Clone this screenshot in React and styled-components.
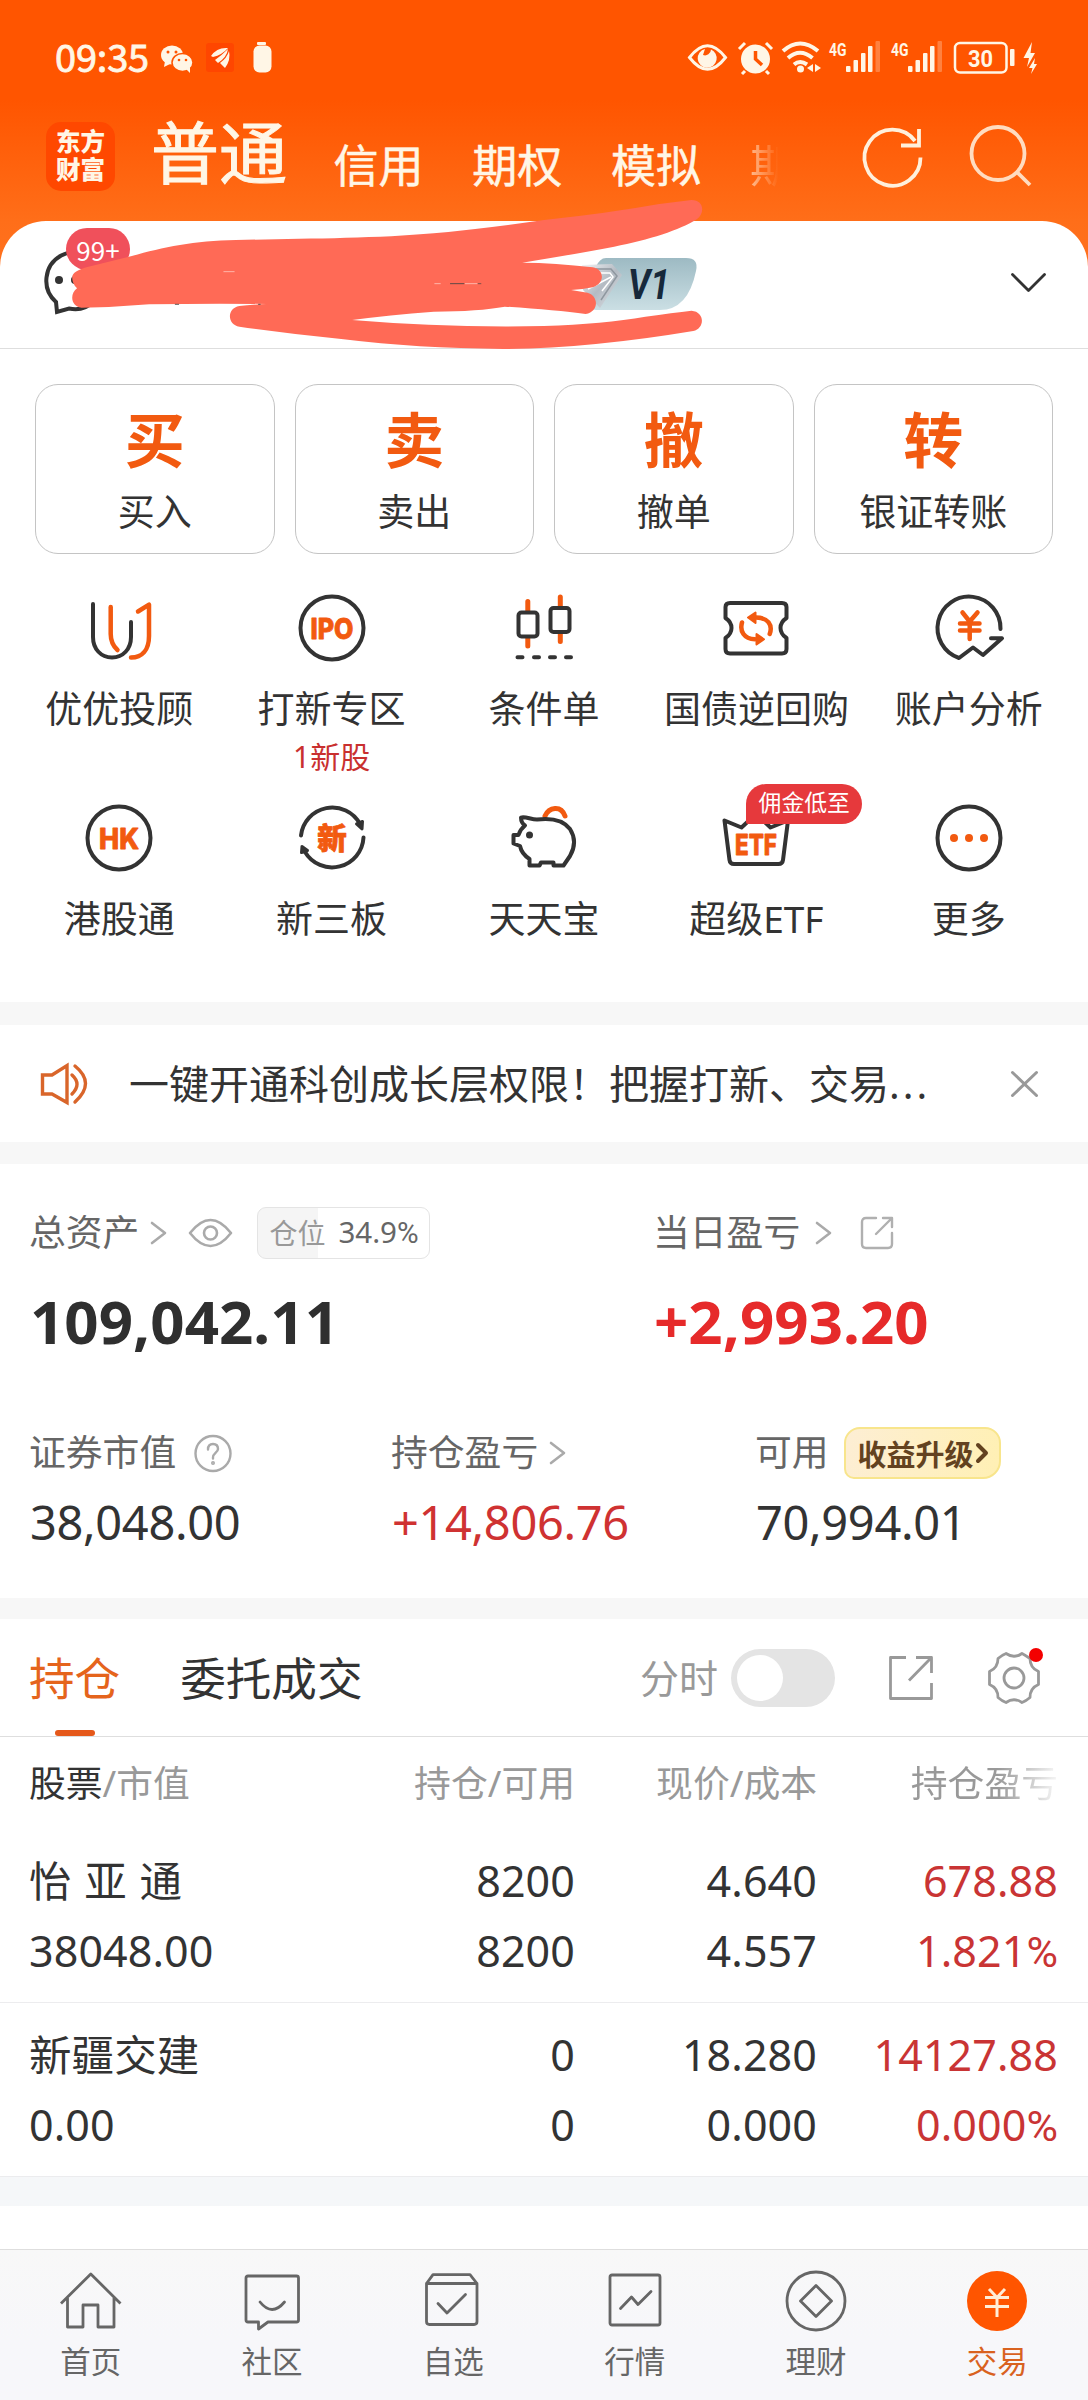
import React, {useState} from 'react';
import styled, {createGlobalStyle, css} from 'styled-components'

const GlobalStyle=createGlobalStyle`
*{box-sizing:border-box;}
body{
margin:0;
background:#fff;
font-family:"Noto Sans","Noto Sans CJK SC",sans-serif;
color:#333;
}
svg{display:block;flex:none;overflow:visible;}
`

const ORANGE='#f25a10'
const DARK='#333'

const Page=styled.div`
display:flex;
flex-direction:column;
width:1088px;
height:2400px;
overflow:hidden;
background:#fff;
`

const Top=styled.div`
background:linear-gradient(#ff5500 0,#ff5500 100px,#ff6e19 221px,#ff7220 280px);
`

/* ---------- status bar ---------- */

const StatusBar=styled.div`
display:flex;
align-items:center;
height:116px;
padding-left:55px;
color:#fff6e6;
`

const Clock=styled.span`
font:400 38px/40px "Noto Sans CJK SC",sans-serif;
width:105px;
letter-spacing:-.2px;
margin-top:-4px;
-webkit-text-stroke:.8px;
`

/* ---------- header ---------- */

const Header=styled.div`
display:flex;
align-items:center;
height:105px;
padding:0 57px 25px 46px;
color:#fff6e6;
`

const Logo=styled.div`
width:69px;
height:69px;
border-radius:15px;
background:#ff4800;
display:flex;
flex-direction:column;
align-items:center;
justify-content:center;
font-size:24.5px;
font-weight:900;
line-height:28.5px;
`

const Accounts=styled.div`
display:flex;
align-items:flex-end;
width:645px;
height:100px;
padding-bottom:10px;
margin-left:36px;
white-space:nowrap;
`

const Account=styled.span`
font-size:45px;
line-height:60px;
width:138.8px;
flex:none;
-webkit-text-stroke:.5px;

${({$active})=>$active&&css`
font-size:68px;
line-height:86px;
width:182.5px;
-webkit-text-stroke:1px;
`}

${({$fade})=>$fade&&css`
width:46px;
color:transparent;
-webkit-text-stroke:0;
background:linear-gradient(90deg,rgba(255,246,230,.6),rgba(255,246,230,0) 62%);
background-clip:text;
-webkit-background-clip:text;
`}
`

const HeaderIcons=styled.div`
display:flex;
margin-left:auto;
gap:46px;
`

/* ---------- user bar ---------- */

const UserBar=styled.div`
position:relative;
display:flex;
align-items:center;
justify-content:space-between;
height:128px;
padding:0 42px 4px 41px;
border-radius:46px 46px 0 0;
border-bottom:1px solid #dedede;
background:#fff;
`

const Message=styled.div`
position:relative;
`

const Count=styled.span`
position:absolute;
left:25px;
top:-22px;
width:64px;
height:42px;
border-radius:21px;
background:#f0505b;
color:#fff;
font:400 26px/44px "Noto Sans CJK SC",sans-serif;
text-align:center;
`

const Scribble=styled.svg`
position:absolute;
left:0;
top:-221px;
`

const Level=styled.svg`
position:absolute;
left:580px;
top:37px;
`

/* ---------- quick actions ---------- */

const Actions=styled.div`
display:grid;
grid-template-columns:repeat(4,1fr);
gap:20px;
padding:35px 35px 0;
`

const ActionCard=styled.div`
height:170px;
border:1px solid #c4c4c4;
border-radius:23px;
display:flex;
flex-direction:column;
align-items:center;
`

const ActionMark=styled.b`
font-size:60px;
line-height:60px;
margin-top:25px;
color:#f25a10;
`

const ActionName=styled.span`
font-size:37px;
line-height:40px;
margin-top:22px;
`

/* ---------- tools ---------- */

const Tools=styled.div`
display:grid;
grid-template-columns:repeat(5,1fr);
grid-auto-rows:210px;
height:448px;
padding:38px 13px 0;
flex:none;
`

const Tool=styled.div`
position:relative;
display:flex;
flex-direction:column;
align-items:center;
`

const ToolName=styled.span`
font-size:37px;
line-height:40px;
margin-top:25px;
white-space:nowrap;
`

const ToolNote=styled.span`
font-size:30px;
line-height:32px;
margin-top:12px;
color:#c9302f;
`

const ToolBadge=styled.span`
position:absolute;
left:96px;
top:-18px;
width:116px;
height:40px;
border-radius:20px 20px 20px 2px;
background:#e6393c;
color:#fff;
font-size:22.8px;
line-height:38px;
text-align:center;
`

const Band=styled.div`
flex:none;
height:${({$h})=>$h}px;
background:${({$cool})=>$cool?'#f5f7f9':'#f7f7f7'};
`

/* ---------- notice ---------- */

const Notice=styled.div`
display:flex;
align-items:center;
height:117px;
padding:0 50px 0 40px;
flex:none;
`

const NoticeText=styled.span`
font-size:40px;
line-height:50px;
margin-left:41px;
flex:1;
white-space:nowrap;

i{
font-style:normal;
letter-spacing:3px;
}
`

/* ---------- assets ---------- */

const Assets=styled.div`
height:434px;
padding:43px 0 0 30px;
flex:none;
`

const AssetRow=styled.div`
display:grid;
grid-template-columns:${({$cols})=>$cols};
margin-bottom:${({$mb})=>$mb||0}px;
`

const AssetLabel=styled.div`
display:flex;
align-items:center;
height:52px;
margin-left:-1px;
font-size:36.8px;
color:#666;
white-space:nowrap;

svg{margin-left:${({$gap})=>$gap||12}px;}
`

const LabelText=styled.span`
line-height:48px;
margin-top:-3px;
`

const AssetValue=styled.div`
font-size:47px;
line-height:50px;
margin-top:18px;
letter-spacing:-.35px;
color:${({$up})=>$up?'#cf3232':DARK};

${({$big})=>$big&&css`
font-size:60px;
font-weight:700;
line-height:70px;
margin-top:27px;
letter-spacing:.05px;
color:${({$up})=>$up?'#e62a2a':'#2f2f2f'};
`}
`

const Position=styled.span`
display:flex;
align-items:center;
width:173px;
height:52px;
margin-left:13px;
padding:0 0 3px 11px;
border:1px solid #e4e4e4;
border-radius:9px;
background:linear-gradient(90deg,#f5f5f5 35%,#fff 35%);
color:#999;
font-size:28px;

em{
font-style:normal;
color:#666;
font-size:29.5px;
margin-left:13px;
}
`

const Percent=styled.span`
font-family:Roboto,sans-serif;
`

const Upgrade=styled.span`
display:flex;
align-items:center;
width:157px;
height:52px;
margin-left:15px;
padding:0 0 1px 12px;
border:2px solid #f8e58c;
border-radius:16px 16px 18px 10px;
background:linear-gradient(100deg,#fdeed4,#fff0b4);
color:#63421f;
font-size:29px;
font-weight:700;

svg{margin-left:2px;}
`

/* ---------- holdings ---------- */

const Tabs=styled.div`
display:flex;
align-items:center;
height:118px;
padding:0 48px 0 29px;
border-bottom:1px solid #dedede;
flex:none;
`

const Tab=styled.span`
position:relative;
font-size:45.6px;
line-height:60px;
margin-right:60px;
color:${({$active})=>$active?'#e5641c':DARK};

${({$active})=>$active&&css`
&:after{
content:'';
position:absolute;
left:26px;
bottom:-28px;
width:40px;
height:6px;
border-radius:3px;
background:#e5581a;
}`}
`

const SwitchLabel=styled.span`
margin:-4px 0 0 auto;
font-size:39px;
color:#999;
`

const Switch=styled.button`
width:104px;
height:58px;
margin:0 54px 0 13px;
padding:0 6px;
border:0;
border-radius:29px;
background:#e4e4e4;
display:flex;
align-items:center;
justify-content:${({$on})=>$on?'flex-end':'flex-start'};
`

const Knob=styled.span`
width:46px;
height:46px;
border-radius:50%;
background:#fff;
`

const Gear=styled.div`
position:relative;
margin-left:55px;

&:after{
content:'';
position:absolute;
right:-3px;
top:-4px;
width:14px;
height:14px;
border-radius:50%;
background:#f40000;
}
`

const TableHead=styled.div`
display:grid;
grid-template-columns:1fr 200px 242px 241px;
height:92px;
padding:0 30px 4px 29px;
align-items:center;
font-size:36.8px;
color:#999;
text-align:right;
flex:none;

b{
font-weight:400;
color:${DARK};
}
`

const HeadCell=styled.span`
text-align:${({$left})=>$left?'left':'right'};

${({$fade})=>$fade&&css`
color:transparent;
background:linear-gradient(90deg,#999 75%,rgba(153,153,153,.08) 100%);
background-clip:text;
-webkit-background-clip:text;
`}
`

const Stock=styled.div`
display:grid;
grid-template-columns:1fr 200px 242px 241px;
height:174px;
padding:17px 30px 0 29px;
border-bottom:1px solid #ececee;
flex:none;
`

const Cell=styled.div`
font-size:43px;
line-height:70px;
letter-spacing:.1px;
text-align:${({$left})=>$left?'left':'right'};
color:${({$up})=>$up?'#c93434':DARK};
white-space:nowrap;

div:first-child{
font-size:${({$left})=>$left?'42.5px':'43px'};
word-spacing:1.5px;
}
`

const Blank=styled.div`
height:43px;
flex:none;
`

/* ---------- bottom nav ---------- */

const BottomNav=styled.div`
display:grid;
grid-template-columns:repeat(6,1fr);
height:151px;
padding-top:19px;
border-top:1px solid #dedede;
background:linear-gradient(#f8f8f8,#f7f7fa 60%);
flex:none;
`

const NavItem=styled.div`
display:flex;
flex-direction:column;
align-items:center;
font-size:30.5px;
line-height:40px;
color:${({$active})=>$active?'#d9621f':'#666'};

svg{margin-bottom:8px;}
`

/* ---------- icons ---------- */

const Line=({size=72, w, h, width=4, color=DARK, children})=>(
    <svg width={w||size} height={h||size} viewBox={`0 0 ${w||size} ${h||size}`} fill="none"
         stroke={color} strokeWidth={width} strokeLinecap="round" strokeLinejoin="round">
        {children}
    </svg>
)

const IconText=({children, x=36, y=46.5, size=28, length})=>(
    <text x={x} y={y} textAnchor="middle" fontSize={size} fontWeight="800" fontFamily='Inter,"Noto Sans CJK SC",sans-serif'
          fill={ORANGE} stroke={ORANGE} strokeWidth=".8" textLength={length} lengthAdjust="spacingAndGlyphs">{children}</text>
)

const icons={
    advisor:<Line>
        <path d="M10 12V45C10 57 18 65.500 29 65.500S48 57 48 45V30"/>
        <path d="M27.700 15V42C27.700 50 30 54 34.500 58M55 19.500L66 12.700V44C66 58 59 65.500 48 65.500" stroke={ORANGE} strokeWidth="4.500"/>
    </Line>,
    ipo:<Line><circle cx="36" cy="36" r="31.500"/><IconText length={43}>IPO</IconText></Line>,
    candle:<Line>
        <path d="M19.800 9.500V19M19.800 46V54M52.300 5V14M52.300 41V49.500" stroke={ORANGE} strokeWidth="5"/>
        <rect x="10.500" y="20.500" width="19" height="24" rx="3"/>
        <rect x="42.500" y="16" width="19" height="24" rx="3"/>
        <path d="M9.500 65.300h5M26 65.300h5M42 65.300h5M58 65.300h5"/>
    </Line>,
    bond:<Line>
        <path d="M10 11H62Q66.500 11 66.500 15V26Q60.500 30 60.500 36T66.500 46V57Q66.500 61.500 62 61.500H10Q5.500 61.500 5.500 57V46Q11.500 42 11.500 36T5.500 26V15Q5.500 11 10 11Z"/>
        <path d="M22 30.500C19.500 39 24 47 35 47.300M49.700 42C53 33 48 25.500 36 25.500" stroke={ORANGE} strokeWidth="4.500"/>
        <path d="M28 25.500L35.500 20.500V31ZM44 47.300L36.500 42V52.500Z" stroke={ORANGE} strokeWidth="2" fill={ORANGE}/>
    </Line>,
    account:<Line>
        <path d="M67.500 37A31.500 31.500 0 1 0 26 66L40 55.500L50 63L69 46.300H58" strokeLinejoin="round"/>
        <path d="M29.500 20.500L36.700 29.500L44.500 20.500M36.700 29V47M27 31.500H46.500M27 38.500H46.500" stroke={ORANGE} strokeWidth="4.500"/>
    </Line>,
    hk:<Line><circle cx="36" cy="36" r="31.500"/><IconText length={40}>HK</IconText></Line>,
    board:<Line>
        <path d="M5 33.500A31.500 31.500 0 0 1 64 22M67.500 35.500A31.500 31.500 0 0 1 9 50"/>
        <path d="M66 27L60.500 22L66.500 19.500ZM6 44.500L5.500 50.500L11.500 48.500Z" fill={DARK} strokeWidth="3"/>
        <IconText y={47} size={29.5}>新</IconText>
    </Line>,
    pig:<Line>
        <path d="M37 14C41 5 53 3 57 14" stroke={ORANGE} strokeWidth="5"/>
        <path d="M13 15.500C17 14 23 17.500 29 17.500C45 15.500 56 19 62 27C69 38 66 47 62 54L55.500 63.500H45.500V60.500H33L31.500 63.500H21.500V57C17 54 13 49 12 44L5.500 41.500V33H10.500C12 28 14.500 25.500 17 23.500C14 21.500 13 19 13 15.500Z"/>
        <circle cx="21.500" cy="33" r="3.500" fill={DARK} stroke="none"/>
    </Line>,
    etf:<Line>
        <path d="M4.500 18.500L21.500 25.500L36 12L50.500 25.500L68 18.500L63 58Q62.500 62 58.500 62H14Q10 62 9.500 58Z"/>
        <IconText y={52.5} length={42} size={28.5}>ETF</IconText>
    </Line>,
    more:<Line>
        <circle cx="36" cy="36" r="31.500"/>
        <g fill={ORANGE} stroke="none"><circle cx="21" cy="36" r="4"/><circle cx="36" cy="36" r="4"/><circle cx="51" cy="36" r="4"/></g>
    </Line>,
}

const navLine=(children)=><Line size={64} width={2.8} color="#666">{children}</Line>

const navIcons={
    home:navLine(<path d="M2 34.500L31.800 5L61.500 34.500M8.500 29V58H24V36H39V58H55V29" strokeLinecap="butt"/>),
    chat:navLine(<>
        <path d="M8 7H56.500Q58.500 7 58.500 9V51Q58.500 53 56.500 53H28L18.500 60V53H8Q6 53 6 51V9Q6 7 8 7Z"/>
        <path d="M20 33Q32 48 44.500 33"/>
    </>),
    pick:navLine(<>
        <path d="M5.500 14.500L12 5.700H49L56 14.500V52.500Q56 55.500 53 55.500H8.500Q5.500 55.500 5.500 52.500ZM5.500 14.500H56"/>
        <path d="M17 34.500L26 44L44.500 25.500"/>
    </>),
    market:navLine(<>
        <rect x="7" y="6" width="50" height="50" rx="2"/>
        <path d="M17.500 39.500L28.500 28L35 35.500L48 22.500"/>
    </>),
    wealth:navLine(<>
        <circle cx="32" cy="32" r="29"/>
        <path d="M32 16.500L47.500 32L32 47.500L16.500 32Z"/>
    </>),
    trade:<Line size={64} width={3} color="#ffeed8">
        <circle cx="32" cy="32" r="30" fill="#ff5500" stroke="none"/>
        <path d="M24 20L32 28.500L40 20M32 28.500V48M20 28.500H44M20 37.500H44" strokeLinecap="butt"/>
    </Line>,
}

const Arrow=()=>(
    <Line w={15} h={24} width={2.6} color="#aaa"><path d="M1 2L14 12L1 22"/></Line>
)

const StatusIcons=()=>(
    <svg width="880" height="32" viewBox="160 42 880 32" fill="#fff6e6">
        {/* wechat */}
        <ellipse cx="172" cy="55" rx="11" ry="9.500"/>
        <path d="M165 61l-1 6 6-3z"/>
        <ellipse cx="182.500" cy="62.500" rx="10.500" ry="9" stroke="#ff5500" strokeWidth="1.500"/>
        <path d="M186 69l4 4 0-6z"/>
        <g fill="#ff5500"><circle cx="168" cy="52" r="1.500"/><circle cx="176" cy="52" r="1.500"/><circle cx="179" cy="60" r="1.300"/><circle cx="186" cy="60" r="1.300"/></g>
        {/* app */}
        <rect x="206" y="43" width="28" height="29" rx="3" fill="#ff4600"/>
        <path d="M211 56Q217 47 228 48Q222 55 213 57ZM215 60Q222 55 228 49Q227 57 218 63ZM220 63Q227 58 229 51Q231 60 225 68Z"/>
        <rect x="257" y="42" width="9" height="3" rx="1"/>
        <rect x="253.500" y="45.500" width="18" height="27" rx="6"/>
        {/* eye */}
        <path d="M689.500 57.500Q707.500 34 725.500 57.500Q707.500 81 689.500 57.500Z" fill="none" stroke="#fff6e6" strokeWidth="3"/>
        <path d="M705 49A9.500 9.500 0 1 0 716.500 60A9.500 9.500 0 0 0 711 49.500A6 6 0 0 1 703 55Z"/>
        {/* alarm */}
        <circle cx="755.500" cy="59" r="14.500"/>
        <path d="M739 49L745 43M772 49L766 43M745 71l-3 3M766 71l3 3" stroke="#fff6e6" strokeWidth="3"/>
        <path d="M755.500 51V59L762 65" fill="none" stroke="#ff5500" strokeWidth="3.500"/>
        {/* wifi */}
        <g fill="none" stroke="#fff6e6" strokeWidth="4">
            <path d="M783 51Q800 36 818 51M788 58Q800 47.500 812.500 58M794 64.500Q800 59.500 807 64.500"/>
        </g>
        <circle cx="800.500" cy="69" r="3.500"/>
        <path d="M813 64V72L807 68ZM815 64V72L821 68Z"/>
        {/* signals */}
        {[829, 891].map(x=>(
            <g key={x}>
                <text x={x} y="55.500" fontSize="18.500" fontWeight="700" fontFamily="Roboto" textLength="17.500" lengthAdjust="spacingAndGlyphs">4G</text>
                <rect x={x+17} y="66" width="4.500" height="6" rx="1"/>
                <rect x={x+24.5} y="60" width="4.500" height="12" rx="1"/>
                <rect x={x+32} y="53" width="4.500" height="19" rx="1"/>
                <rect x={x+39} y="46" width="4.500" height="26" rx="1"/>
                <rect x={x+46.5} y="41" width="4.500" height="31" rx="1" opacity=".28"/>
            </g>
        ))}
        {/* battery */}
        <rect x="955" y="43" width="51.500" height="29.500" rx="5" fill="none" stroke="#fff6e6" strokeWidth="2.500"/>
        <text x="980.500" y="66.500" fontSize="24.500" fontWeight="700" textAnchor="middle" fontFamily="Roboto" textLength="25" lengthAdjust="spacingAndGlyphs">30</text>
        <rect x="1010" y="49" width="4.500" height="17" rx="1"/>
        <path d="M1032 42L1023.500 58H1029L1027 67L1035 53H1030.500ZM1035 58L1029 68H1032.500L1031 74L1037 64H1034Z"/>
    </svg>
)

const Marks=()=>(
    <Scribble width="1088" height="360" viewBox="0 0 1088 360">
        <g transform="scale(.34698 .33333)">
            <path fill="#ff6a56" d="M208 832Q208 812 255 800L380 768C470 742 560 722 680 720C860 716 1080 716 1250 700Q1400 685 1568 660Q1750 640 1900 612L1993 600C2030 600 2032 640 2008 658C1960 690 1870 720 1770 740Q1660 762 1505 788Q1600 788 1708 802C1742 808 1745 850 1708 862Q1680 868 1646 870L1693 878C1725 886 1728 935 1688 942Q1600 930 1455 920Q1380 934 1250 935Q1120 945 1015 960Q1290 984 1568 978Q1740 972 1860 950Q1940 938 1993 932C2032 935 2032 985 1998 993Q1700 1045 1450 1047Q1200 1045 990 1018Q840 1002 690 980C655 975 652 925 690 918Q720 914 768 912Q600 910 430 913Q330 922 235 923C204 920 200 882 222 865Q208 852 208 832Z"/>
            <path d="M1297 851H1338M504 913h12M744 913h7" stroke="#444" strokeWidth="2.500"/>
            <path d="M644 815H676M1252 851H1270M1340 851H1376" stroke="#ffd9d2" strokeWidth="2"/>
            <path d="M1377 851h10" stroke="#444" strokeWidth="2"/>
        </g>
    </Scribble>
)

const LevelBadge=()=>(
    <Level width="118" height="54" viewBox="580 258 118 54">
        <defs>
            <linearGradient id="lv" x1="0" y1="0" x2="0" y2="1"><stop offset="0" stopColor="#9dbac3"/><stop offset="1" stopColor="#cbdfe4"/></linearGradient>
            <linearGradient id="gem" x1="0" y1="0" x2="1" y2="1"><stop offset="0" stopColor="#f4f4f6"/><stop offset=".5" stopColor="#b4bbc3"/><stop offset="1" stopColor="#dfe4e8"/></linearGradient>
        </defs>
        <path d="M606 258H686Q699 258 696 271Q688 310 660 310H596Q588 310 590 296Q593 258 606 258Z" fill="url(#lv)"/>
        <path d="M582 265L612 264L622 275L600 308L583 290Z" fill="url(#gem)"/>
        <path d="M596 269H611L617 276L601 300" fill="none" stroke="#8f979f" strokeWidth="1.500"/>
        <path d="M600 273H610L613 277L602 291M588 289L611 277" fill="none" stroke="#fff" strokeWidth="1.500"/>
        <text x="628" y="299" fontSize="41.500" fontWeight="700" fontStyle="italic" fontFamily="Roboto" fill="#16283a" textLength="42" lengthAdjust="spacingAndGlyphs">V1</text>
    </Level>
)

const actions=[['买','买入'],['卖','卖出'],['撤','撤单'],['转','银证转账']]

const tools=[
    {icon:'advisor', name:'优优投顾'},
    {icon:'ipo', name:'打新专区', note:'1新股'},
    {icon:'candle', name:'条件单'},
    {icon:'bond', name:'国债逆回购'},
    {icon:'account', name:'账户分析'},
    {icon:'hk', name:'港股通'},
    {icon:'board', name:'新三板'},
    {icon:'pig', name:'天天宝'},
    {icon:'etf', name:'超级ETF', badge:'佣金低至'},
    {icon:'more', name:'更多'},
]

const stocks=[
    {name:'怡 亚 通', value:'38048.00', hold:'8200', free:'8200', price:'4.640', cost:'4.557', profit:'678.88', rate:'1.821'},
    {name:'新疆交建', value:'0.00', hold:'0', free:'0', price:'18.280', cost:'0.000', profit:'14127.88', rate:'0.000'},
]

const navs=[['home','首页'],['chat','社区'],['pick','自选'],['market','行情'],['wealth','理财'],['trade','交易']]

function App() {
    const [minute, setMinute]=useState(false)

    return (
        <Page>
            <GlobalStyle/>
            <Top>
                <StatusBar>
                    <Clock>09:35</Clock>
                    <StatusIcons/>
                </StatusBar>
                <Header>
                    <Logo><span>东方</span><span>财富</span></Logo>
                    <Accounts>
                        <Account $active>普通</Account>
                        <Account>信用</Account>
                        <Account>期权</Account>
                        <Account>模拟</Account>
                        <Account $fade>期</Account>
                    </Accounts>
                    <HeaderIcons>
                        <Line size={62} width={3.8} color="#fff0dc">
                            <path d="M59.500 32.500A28 28 0 1 1 54 16M58 4V20.500H40" strokeLinecap="butt" strokeLinejoin="miter"/>
                        </Line>
                        <Line size={62} width={3.8} color="#ffdcc0">
                            <circle cx="29" cy="28.500" r="26.500"/>
                            <path d="M48 47L61 60" strokeLinecap="butt"/>
                        </Line>
                    </HeaderIcons>
                </Header>
                <UserBar>
                    <Message>
                        <Line w={64} h={66}>
                            <path d="M15 52A28.500 28.500 0 1 1 28 58.500L16 62Z" strokeLinejoin="miter"/>
                            <circle cx="18" cy="30" r="4" fill={DARK} stroke="none"/>
                            <circle cx="34" cy="30" r="4" fill={DARK} stroke="none"/>
                        </Line>
                        <Count>99+</Count>
                    </Message>
                    <LevelBadge/>
                    <Marks/>
                    <Line w={35} h={19} width={2.8}><path d="M1.500 1.500L17.500 17.500L33.500 1.500"/></Line>
                </UserBar>
            </Top>

            <Actions>
                {actions.map(([mark, name])=>(
                    <ActionCard key={name}>
                        <ActionMark>{mark}</ActionMark>
                        <ActionName>{name}</ActionName>
                    </ActionCard>
                ))}
            </Actions>

            <Tools>
                {tools.map((t)=>(
                    <Tool key={t.name}>
                        {icons[t.icon]}
                        <ToolName>{t.name}</ToolName>
                        {t.note&&<ToolNote>{t.note}</ToolNote>}
                        {t.badge&&<ToolBadge>{t.badge}</ToolBadge>}
                    </Tool>
                ))}
            </Tools>

            <Band $h={23}/>
            <Notice>
                <Line w={48} h={42} width={3.4} color="#d9652a">
                    <path d="M2.500 12H12L27 2.500V39.500L12 31H2.500Z" strokeLinejoin="miter"/>
                    <path d="M32 12Q42 21 32 31M35 3Q56 20 35 39"/>
                </Line>
                <NoticeText>一键开通科创成长层权限！把握打新、交易<i>...</i></NoticeText>
                <Line w={27} h={26} width={3} color="#999"><path d="M1.500 1.500L25.500 24.500M25.500 1.500L1.500 24.500"/></Line>
            </Notice>
            <Band $h={22}/>

            <Assets>
                <AssetRow $cols="624px 1fr" $mb={71}>
                    <div>
                        <AssetLabel>
                            <LabelText>总资产</LabelText><Arrow/>
                            <Line w={66} h={30} width={2.6} color="#aaa">
                                <path d="M12 15Q32.500 -11 53 15Q32.500 41 12 15Z"/><circle cx="32.500" cy="15" r="6.500"/>
                            </Line>
                            <Position>仓位<em>34.9<Percent>%</Percent></em></Position>
                        </AssetLabel>
                        <AssetValue $big>109,042.11</AssetValue>
                    </div>
                    <div>
                        <AssetLabel $gap={16}>
                            <LabelText>当日盈亏</LabelText><Arrow/>
                            <Line w={46} h={34} width={2.4} color="#b0b0b0">
                                <path d="M29 2H19Q15 2 15 6V28Q15 32 19 32H41Q45 32 45 28V17M29 18L44 3M36 2H45V11"/>
                            </Line>
                        </AssetLabel>
                        <AssetValue $big $up>+2,993.20</AssetValue>
                    </div>
                </AssetRow>
                <AssetRow $cols="362px 364px 1fr">
                    <div>
                        <AssetLabel $gap={18}>
                            <LabelText>证券市值</LabelText>
                            <Line size={38} width={2.4} color="#aaa">
                                <circle cx="19" cy="19.500" r="17.500"/>
                                <path d="M14 15.500Q14 10 19 10T24 15C24 18.500 19 19 19 23.500V24.500"/>
                                <circle cx="19" cy="29" r=".8"/>
                            </Line>
                        </AssetLabel>
                        <AssetValue>38,048.00</AssetValue>
                    </div>
                    <div>
                        <AssetLabel>
                            <LabelText>持仓盈亏</LabelText><Arrow/>
                        </AssetLabel>
                        <AssetValue $up>+14,806.76</AssetValue>
                    </div>
                    <div>
                        <AssetLabel>
                            <LabelText>可用</LabelText>
                            <Upgrade>收益升级<Line w={12} h={20} width={4} color="#63421f"><path d="M2 2L10 10L2 18"/></Line></Upgrade>
                        </AssetLabel>
                        <AssetValue>70,994.01</AssetValue>
                    </div>
                </AssetRow>
            </Assets>
            <Band $h={21}/>

            <Tabs>
                <Tab $active>持仓</Tab>
                <Tab>委托成交</Tab>
                <SwitchLabel>分时</SwitchLabel>
                <Switch $on={minute} onClick={()=>setMinute(!minute)}><Knob/></Switch>
                <Line size={44} width={2.8} color="#999">
                    <path d="M17 1.500H1.500V42.500H42.500V27M20 24.500L41.500 2.500M27 1.500H42.500V17" strokeLinecap="butt"/>
                </Line>
                <Gear>
                    <Line size={52} width={2.8} color="#999">
                        <path d="M18 1.500Q26 7 34 1.500Q37 3 42 6.500Q42 16 50.500 19.500V32.500Q42 36 42 45.500Q38 49 34 50.500Q26 45 18 50.500Q14 49 10 45.500Q10 36 1.500 32.500V19.500Q10 16 10 6.500Q14 3 18 1.500Z"/>
                        <circle cx="26" cy="26" r="10"/>
                    </Line>
                </Gear>
            </Tabs>

            <TableHead>
                <HeadCell $left><b>股票</b>/市值</HeadCell>
                <HeadCell>持仓/可用</HeadCell>
                <HeadCell>现价/成本</HeadCell>
                <HeadCell $fade>持仓盈亏</HeadCell>
            </TableHead>
            {stocks.map((s)=>(
                <Stock key={s.name}>
                    <Cell $left><div>{s.name}</div><div>{s.value}</div></Cell>
                    <Cell><div>{s.hold}</div><div>{s.free}</div></Cell>
                    <Cell><div>{s.price}</div><div>{s.cost}</div></Cell>
                    <Cell $up><div>{s.profit}</div><div>{s.rate}<Percent>%</Percent></div></Cell>
                </Stock>
            ))}
            <Band $h={29} $cool/>
            <Blank/>

            <BottomNav>
                {navs.map(([icon, name])=>(
                    <NavItem key={name} $active={icon==='trade'}>
                        {navIcons[icon]}
                        {name}
                    </NavItem>
                ))}
            </BottomNav>
        </Page>
    );
}

export default App;
